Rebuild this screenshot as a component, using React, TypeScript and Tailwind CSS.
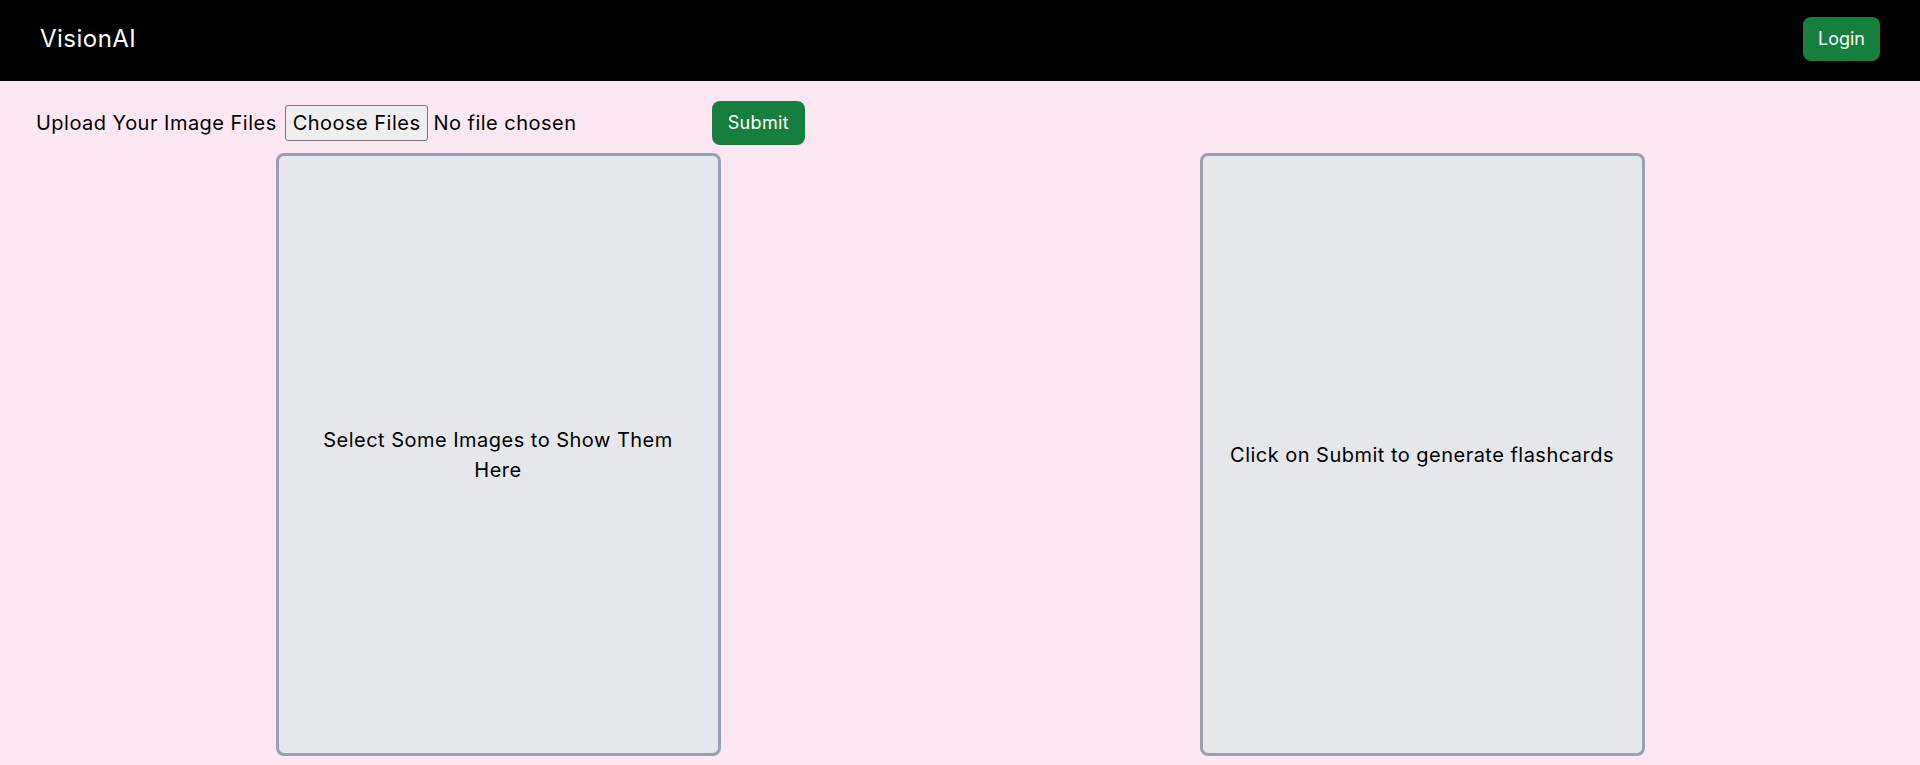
import React from "react";

export default function App() {
  return (
    <div
      className="min-h-[765px] bg-[#fce7f3] text-black tracking-[0.03em]"
      style={{ fontFamily: "Inter, 'Noto Sans', sans-serif" }}
    >
      <header className="flex h-[81px] items-center justify-between bg-black pl-10 pr-10 pb-[3px]">
        <div className="text-2xl text-white">VisionAI</div>
        <button className="rounded-lg bg-[#15803d] px-[15px] py-2 text-lg leading-7 text-white tracking-normal">
          Login
        </button>
      </header>

      <main className="px-9 pt-5">
        <div className="flex items-center text-xl leading-[30px]">
          <span>Upload Your Image Files</span>
          <label className="ml-2 flex w-[427px] items-center cursor-default">
            <input type="file" multiple className="hidden" />
            <span className="rounded-[3px] border border-[#767676] bg-[#efefef] px-[7px] py-[2px]">
              Choose Files
            </span>
            <span className="ml-[5px]">No file chosen</span>
          </label>
          <button className="rounded-lg bg-[#15803d] px-4 py-2 text-lg leading-7 text-white tracking-[0.02em]">
            Submit
          </button>
        </div>

        <div className="mt-2 grid grid-cols-2 justify-items-center">
          <div className="flex h-[603px] w-[445px] items-center justify-center rounded-lg border-[3px] border-gray-400 bg-gray-200 p-5 text-center text-xl leading-[30px]">
            Select Some Images to Show Them Here
          </div>
          <div className="flex h-[603px] w-[445px] items-center justify-center rounded-lg border-[3px] border-gray-400 bg-gray-200 p-5 text-center text-xl leading-[30px]">
            Click on Submit to generate flashcards
          </div>
        </div>
      </main>
    </div>
  );
}
